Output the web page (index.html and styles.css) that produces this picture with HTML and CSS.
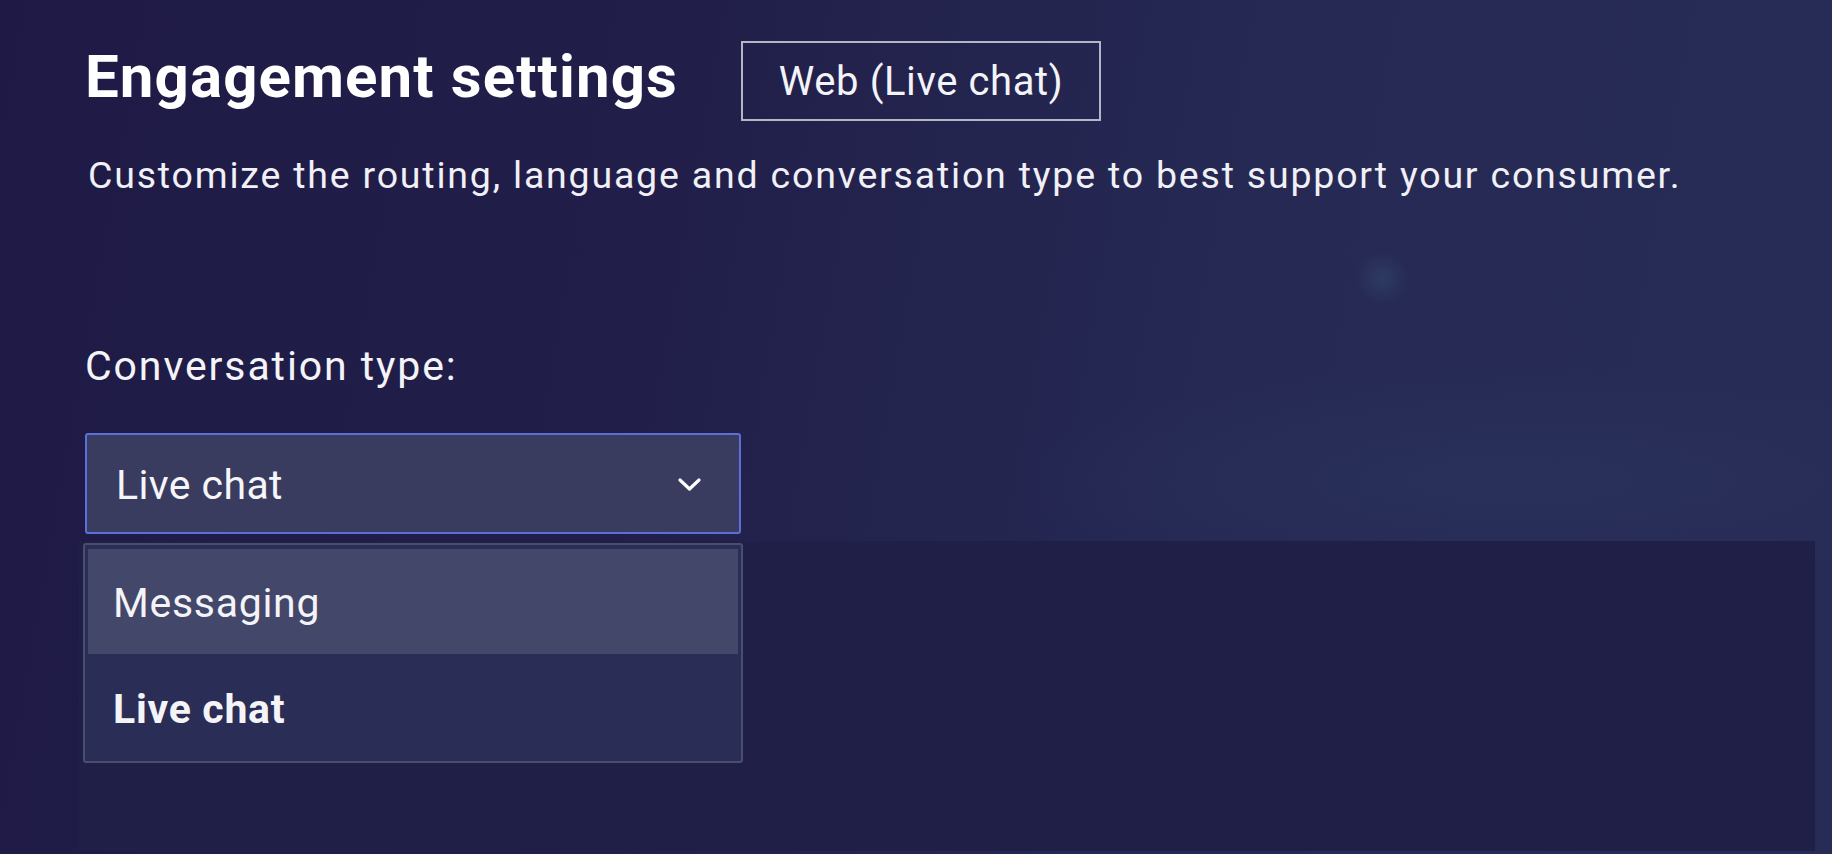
FILE: index.html
```html
<!DOCTYPE html>
<html lang="en">
<head>
<meta charset="utf-8">
<title>Engagement settings</title>
<link rel="stylesheet" href="styles.css">
</head>
<body>
<div class="page">
  <div class="glow"></div>
  <main class="content">
    <header class="header">
      <h1 class="title">Engagement settings</h1>
      <div class="channel-tag">Web (Live chat)</div>
    </header>
    <p class="subtitle">Customize the routing, language and conversation type to best support your consumer.</p>
    <label class="field-label">Conversation type:</label>
    <div class="select-wrap">
      <div class="select">
        <span class="select-value">Live chat</span>
        <svg class="chevron" width="23" height="14" viewBox="0 0 23 14" aria-hidden="true">
          <path d="M2 2 L11.5 11 L21 2" fill="none" stroke="#ffffff" stroke-width="3.2" stroke-linecap="round" stroke-linejoin="round"/>
        </svg>
      </div>
      <ul class="menu">
        <li class="menu-item is-hover">Messaging</li>
        <li class="menu-item is-selected">Live chat</li>
      </ul>
    </div>
    <section class="panel"></section>
  </main>
</div>
</body>
</html>
```

FILE: styles.css
```css
* { box-sizing: border-box; }

html, body {
  margin: 0;
  padding: 0;
  height: 100%;
}

body {
  font-family: Roboto, "Liberation Sans", Arial, sans-serif;
  color: #ffffff;
  overflow: hidden;
}

.page {
  position: relative;
  width: 100%;
  height: 854px;
  overflow: hidden;
  background:
    radial-gradient(ellipse 700px 160px at 1500px 480px, rgba(48, 62, 105, 0.35), rgba(48, 62, 105, 0) 70%),
    linear-gradient(100deg, #1e1a45 0%, #211f4a 35%, #252953 65%, #272c56 100%);
}

.glow {
  position: absolute;
  left: 1354px;
  top: 250px;
  width: 56px;
  height: 56px;
  border-radius: 50%;
  background: radial-gradient(circle, rgba(52, 70, 110, 0.6) 0%, rgba(52, 70, 110, 0) 70%);
}

.content {
  position: relative;
  padding: 41px 0 0 85px;
}

.header {
  display: flex;
  align-items: flex-start;
  gap: 63px;
}

.title {
  margin: 0;
  font-size: 60px;
  line-height: 72px;
  font-weight: 700;
  letter-spacing: 1.1px;
  color: #ffffff;
}

.channel-tag {
  width: 360px;
  height: 80px;
  border: 2px solid #b4b6c6;
  padding-top: 2px;
  font-size: 40px;
  line-height: 74px;
  text-align: center;
  color: #f3f3f8;
  letter-spacing: 0.6px;
}

.subtitle {
  margin: 32px 0 0 3px;
  font-size: 37.5px;
  line-height: 44px;
  color: #f0f0f6;
  letter-spacing: 1.8px;
}

.field-label {
  display: block;
  margin-top: 145px;
  font-size: 41px;
  line-height: 48px;
  color: #f4f4f8;
  letter-spacing: 1.9px;
}

.select-wrap {
  position: relative;
  width: 656px;
  margin-top: 43px;
}

.select {
  height: 101px;
  border: 2px solid #5b6fd8;
  border-radius: 3px;
  background: #393c5f;
  display: flex;
  align-items: center;
  justify-content: space-between;
  padding: 0 38px 0 29px;
}

.select-value {
  font-size: 41px;
  line-height: 48px;
  color: #f6f6fa;
  letter-spacing: 0.4px;
  padding-top: 2px;
}

.chevron {
  display: block;
  margin-top: 2px;
}

.menu {
  position: absolute;
  z-index: 2;
  left: -2px;
  top: 110px;
  width: 660px;
  margin: 0;
  padding: 4px 3px 2px 3px;
  list-style: none;
  background: #2a2d55;
  border: 2px solid #4a4d6d;
  border-radius: 3px;
}

.menu-item {
  height: 105px;
  line-height: 105px;
  padding: 2px 0 0 25px;
  font-size: 41px;
  color: #f4f4f8;
  letter-spacing: 0.7px;
}

.menu-item.is-hover {
  background: #43476a;
}

.menu-item.is-selected {
  font-weight: 700;
  line-height: 103px;
  padding-top: 4px;
}

.panel {
  margin: 7px 0 0 -6px;
  width: 1736px;
  height: 310px;
  background: #201f47;
}
```
